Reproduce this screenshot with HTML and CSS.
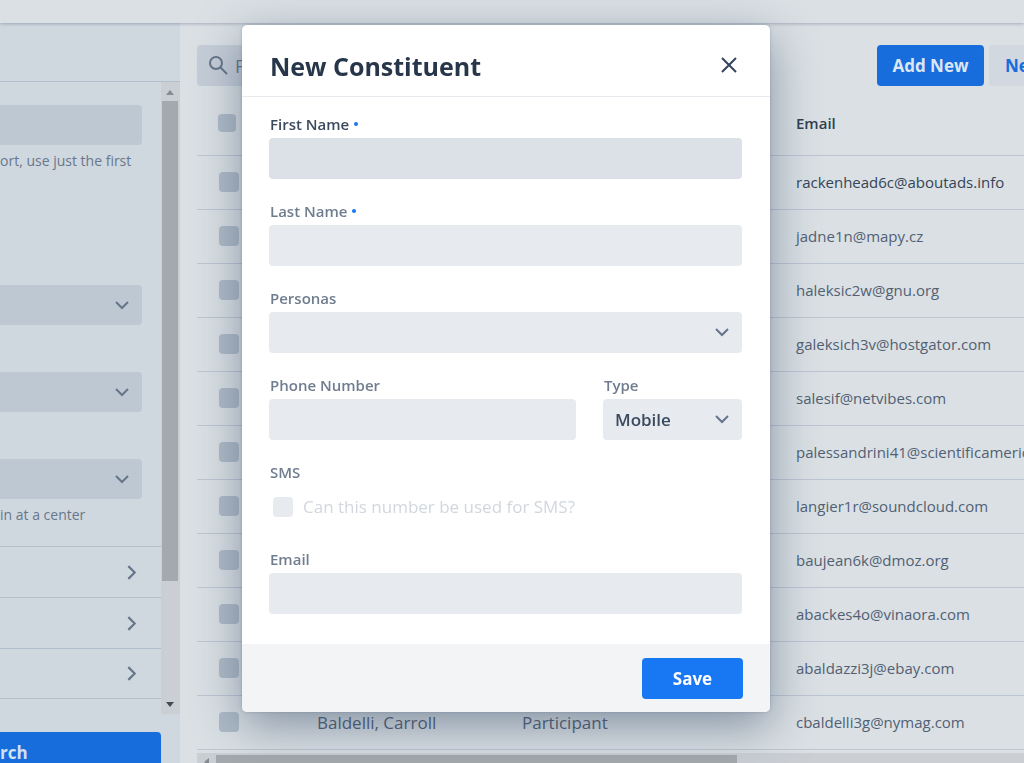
FILE: index.html
```html
<!DOCTYPE html>
<html lang="en">
  <head>
    <meta charset="UTF-8" />
    <meta name="viewport" content="width=device-width, initial-scale=1.0" />
    <title>New Constituent</title>
    <link rel="stylesheet" href="styles.css">
  </head>
  <body>
    <header class="topbar"></header>
    <div class="page">
      <aside class="sidebar">
        <div class="sidebar-head"></div>
        <div class="sidebar-scroll">
          <div class="filters">
            <div class="filter filter-tall">
              <input type="text" class="filter-control" />
              <p class="hint">ort, use just the first</p>
            </div>
            <div class="filter">
              <div class="select-wrap">
                <select class="filter-control"></select>
                <svg class="chevron" viewBox="0 0 16 16"><path d="M2 5l6 6 6-6" /></svg>
              </div>
            </div>
            <div class="filter">
              <div class="select-wrap">
                <select class="filter-control"></select>
                <svg class="chevron" viewBox="0 0 16 16"><path d="M2 5l6 6 6-6" /></svg>
              </div>
            </div>
            <div class="filter filter-last">
              <div class="select-wrap">
                <select class="filter-control"></select>
                <svg class="chevron" viewBox="0 0 16 16"><path d="M2 5l6 6 6-6" /></svg>
              </div>
              <p class="hint">in at a center</p>
            </div>
            <button type="button" class="group">
              <svg viewBox="0 0 16 16"><path d="M5 2l6 6-6 6" /></svg>
            </button>
            <button type="button" class="group">
              <svg viewBox="0 0 16 16"><path d="M5 2l6 6-6 6" /></svg>
            </button>
            <button type="button" class="group">
              <svg viewBox="0 0 16 16"><path d="M5 2l6 6-6 6" /></svg>
            </button>
          </div>
          <div class="vbar">
            <svg class="vbar-arrow" viewBox="0 0 18 18"><path d="M5 13l4-5 4 5z" /></svg>
            <div class="vbar-thumb"></div>
            <svg class="vbar-arrow vbar-down" viewBox="0 0 18 18"><path d="M5 6l4 5 4-5z" /></svg>
          </div>
        </div>
        <div class="sidebar-foot">
          <button type="button" class="search-button">rch</button>
        </div>
      </aside>

      <main class="main">
        <div class="toolbar">
          <div class="finder">
            <svg class="finder-icon" viewBox="0 0 20 20">
              <circle cx="8" cy="7" r="6" />
              <path d="M12 11l7 7" />
            </svg>
            <input type="text" class="finder-input" placeholder="Filter" />
          </div>
          <div class="actions">
            <button type="button" class="button">Add New</button>
            <button type="button" class="button button-light">New</button>
          </div>
        </div>
        <table class="people">
          <colgroup>
            <col class="col-check" />
            <col class="col-name" />
            <col class="col-persona" />
            <col class="col-email" />
          </colgroup>
          <thead>
            <tr>
              <th><input type="checkbox" class="check check-small" /></th>
              <th></th>
              <th></th>
              <th>Email</th>
            </tr>
          </thead>
          <tbody>
            <tr class="current"><td><input type="checkbox" class="check" /></td><td></td><td></td><td>rackenhead6c@aboutads.info</td></tr>
            <tr><td><input type="checkbox" class="check" /></td><td></td><td></td><td>jadne1n@mapy.cz</td></tr>
            <tr><td><input type="checkbox" class="check" /></td><td></td><td></td><td>haleksic2w@gnu.org</td></tr>
            <tr><td><input type="checkbox" class="check" /></td><td></td><td></td><td>galeksich3v@hostgator.com</td></tr>
            <tr><td><input type="checkbox" class="check" /></td><td></td><td></td><td>salesif@netvibes.com</td></tr>
            <tr><td><input type="checkbox" class="check" /></td><td></td><td></td><td>palessandrini41@scientificamerican.com</td></tr>
            <tr><td><input type="checkbox" class="check" /></td><td></td><td></td><td>langier1r@soundcloud.com</td></tr>
            <tr><td><input type="checkbox" class="check" /></td><td></td><td></td><td>baujean6k@dmoz.org</td></tr>
            <tr><td><input type="checkbox" class="check" /></td><td></td><td></td><td>abackes4o@vinaora.com</td></tr>
            <tr><td><input type="checkbox" class="check" /></td><td></td><td></td><td>abaldazzi3j@ebay.com</td></tr>
            <tr><td><input type="checkbox" class="check" /></td><td class="large">Baldelli, Carroll</td><td class="large">Participant</td><td>cbaldelli3g@nymag.com</td></tr>
          </tbody>
        </table>
        <div class="hbar">
          <svg class="hbar-arrow" viewBox="0 0 18 18"><path d="M12 5l-5 4 5 4z" /></svg>
          <div class="hbar-thumb"></div>
        </div>
      </main>
    </div>

    <div class="overlay">
      <form class="dialog" role="dialog" aria-labelledby="dialogTitle">
        <div class="dialog-head">
          <h1 id="dialogTitle">New Constituent</h1>
          <button type="button" class="close">
            <svg viewBox="0 0 18 18"><path d="M2 2l14 14M16 2L2 16" /></svg>
          </button>
        </div>
        <div class="dialog-body">
          <div class="field field-focus">
            <label for="firstName">First Name <span class="dot"></span></label>
            <input type="text" id="firstName" class="control" />
          </div>
          <div class="field">
            <label for="lastName">Last Name <span class="dot"></span></label>
            <input type="text" id="lastName" class="control" />
          </div>
          <div class="field">
            <label for="personas">Personas</label>
            <div class="select-wrap">
              <select id="personas" class="control"></select>
              <svg class="chevron" viewBox="0 0 16 16"><path d="M2 5l6 6 6-6" /></svg>
            </div>
          </div>
          <div class="field-row">
            <div class="field">
              <label for="phone">Phone Number</label>
              <input type="tel" id="phone" class="control" />
            </div>
            <div class="field field-type">
              <label for="phoneType">Type</label>
              <div class="select-wrap">
                <select id="phoneType" class="control">
                  <option>Mobile</option>
                </select>
                <svg class="chevron" viewBox="0 0 16 16"><path d="M2 5l6 6 6-6" /></svg>
              </div>
            </div>
          </div>
          <div class="field">
            <div class="field-title">SMS</div>
            <div class="sms">
              <input type="checkbox" id="sms" class="check" disabled />
              <label for="sms">Can this number be used for SMS?</label>
            </div>
          </div>
          <div class="field">
            <label for="email">Email</label>
            <input type="email" id="email" class="control" />
          </div>
        </div>
        <div class="dialog-foot">
          <button type="submit" class="button button-save">Save</button>
        </div>
      </form>
    </div>
  </body>
</html>
```

FILE: styles.css
```css
* {
  box-sizing: border-box;
}
body {
  margin: 0;
  height: 100vh;
  overflow: hidden;
  display: flex;
  flex-direction: column;
  font-family: "Open Sans", "Noto Sans", sans-serif;
  font-size: 15px;
  color: #526074;
  background-color: #dae0e4;
}
button,
input,
select {
  font-family: inherit;
  margin: 0;
}
svg {
  display: block;
  fill: none;
  stroke: #66758a;
  stroke-width: 2;
}
.topbar {
  flex: none;
  height: 23px;
  background-color: #dae0e4;
  box-shadow: 0 1px 3px rgba(60, 80, 105, 0.35);
  z-index: 1;
}
.page {
  flex: 1;
  min-height: 0;
  display: flex;
}

/* Sidebar */
.sidebar {
  flex: none;
  width: 180px;
  display: flex;
  flex-direction: column;
  background-color: #d0d8df;
}
.sidebar-head {
  flex: none;
  height: 59px;
  border-bottom: 1px solid #b1becb;
}
.sidebar-scroll {
  flex: 1;
  min-height: 0;
  display: flex;
}
.filters {
  flex: 1;
  padding-top: 23px;
}
.filter {
  height: 87px;
  padding-right: 19px;
}
.filter-tall {
  height: 180px;
}
.filter-control {
  display: block;
  width: 100%;
  height: 40px;
  border: none;
  border-radius: 0 4px 4px 0;
  background-color: #bdc8d2;
  appearance: none;
}
.hint {
  margin: 4px 0 0;
  font-size: 14px;
  line-height: 24px;
  color: #68778b;
}
.group {
  display: flex;
  width: 100%;
  height: 51px;
  align-items: center;
  justify-content: flex-end;
  padding: 0 21px 0 0;
  border: none;
  border-top: 1px solid #b1becb;
  background: none;
}
.group:last-child {
  border-bottom: 1px solid #b1becb;
}
.group svg {
  width: 17px;
  height: 17px;
}
.select-wrap {
  position: relative;
}
.chevron {
  position: absolute;
  right: 12px;
  top: 12px;
  width: 16px;
  height: 16px;
  pointer-events: none;
}
.vbar {
  width: 19px;
  display: flex;
  flex-direction: column;
  background-color: #cbcfd4;
}
.vbar-arrow,
.hbar-arrow {
  flex: none;
  width: 18px;
  height: 18px;
  stroke: none;
  fill: #878c92;
}
.vbar-down {
  margin-top: auto;
  fill: #454b53;
}
.vbar-thumb {
  width: 16px;
  height: 76%;
  margin: 1px;
  background-color: #a4a9ad;
}
.sidebar-foot {
  flex: none;
  height: 49px;
  padding: 18px 19px 0 0;
}
.search-button {
  width: 100%;
  height: 41px;
  padding: 0;
  border: none;
  border-radius: 0 4px 0 0;
  background-color: #176ddc;
  color: #d3e0f1;
  font-size: 17px;
  font-weight: 700;
  text-align: left;
}

/* Main list */
.main {
  flex: 1;
  min-width: 0;
  padding: 22px 0 0 17px;
  overflow: hidden;
}
.toolbar {
  display: flex;
  justify-content: space-between;
}
.finder {
  display: flex;
  width: 300px;
  height: 41px;
  align-items: center;
  gap: 7px;
  padding: 0 11px;
  border-radius: 4px;
  background-color: #c5cdd7;
}
.finder-icon {
  flex: none;
  width: 20px;
  height: 20px;
}
.finder-input {
  flex: 1;
  min-width: 0;
  padding: 0;
  border: none;
  background: none;
  font-size: 18px;
}
.finder-input::placeholder {
  color: #66758a;
}
.actions {
  display: flex;
  gap: 5px;
  margin-right: -50px;
}
.button {
  height: 41px;
  width: 107px;
  padding: 0;
  border: none;
  border-radius: 4px;
  background-color: #176ddc;
  color: #dce6f2;
  font-size: 17px;
  font-weight: 700;
}
.button-light {
  width: 85px;
  padding: 0 16px;
  background-color: #d1d8df;
  color: #176ddc;
  text-align: left;
}
.people {
  width: 100%;
  table-layout: fixed;
  border-collapse: collapse;
  white-space: nowrap;
}
.col-check {
  width: 120px;
}
.col-name {
  width: 205px;
}
.col-persona {
  width: 274px;
}
.people th {
  height: 69px;
  padding: 6px 0 0;
  text-align: left;
  font-weight: 600;
  color: #2f3e51;
  border-bottom: 1px solid #bcc6d2;
}
.people td {
  height: 54px;
  padding: 0;
  border-bottom: 1px solid #bcc6d2;
}
.people .current {
  color: #354457;
}
.people .large {
  font-size: 17px;
}
.people .check {
  margin-left: 22px;
}
.check {
  display: block;
  width: 20px;
  height: 20px;
  border-radius: 4px;
  background-color: #afbbc7;
  appearance: none;
}
.people .check-small {
  width: 18px;
  height: 18px;
  margin-left: 21px;
}
.hbar {
  display: flex;
  height: 18px;
  margin-top: 3px;
  background-color: #cbcfd4;
}
.hbar-thumb {
  width: 63%;
  height: 16px;
  margin: 2px 1px 0;
  background-color: #a4a9ad;
}

/* Dialog */
.overlay {
  position: fixed;
  inset: 0;
  z-index: 2;
  display: flex;
  align-items: flex-start;
  justify-content: center;
  padding: 25px 12px 0 0;
}
.dialog {
  width: 528px;
  border-radius: 5px;
  overflow: hidden;
  background-color: #fff;
  box-shadow: 0 0 3px rgba(60, 80, 110, 0.3), 0 14px 46px rgba(50, 70, 100, 0.5);
}
.dialog-head {
  display: flex;
  align-items: center;
  justify-content: space-between;
  height: 72px;
  padding: 10px 32px 0 28px;
  border-bottom: 1px solid #e7eaee;
}
.dialog-head h1 {
  margin: 0;
  font-size: 25px;
  font-weight: 700;
  color: #27364a;
}
.close {
  padding: 0;
  border: none;
  background: none;
}
.close svg {
  width: 18px;
  height: 18px;
  margin-bottom: 2px;
  stroke: #34445a;
}
.dialog-body {
  display: flex;
  flex-direction: column;
  gap: 19px;
  padding: 14px 28px 30px 27px;
}
.field {
  flex: 1;
  min-width: 0;
}
.field > label,
.field-title {
  display: block;
  padding-left: 1px;
  font-weight: 600;
  line-height: 27px;
  color: #6f7d8f;
}
.field-focus > label {
  color: #3a4a5f;
}
.dot {
  display: inline-block;
  width: 4px;
  height: 4px;
  margin: 0 0 3px 1px;
  border-radius: 50%;
  background-color: #1877f2;
  vertical-align: middle;
}
.control {
  display: block;
  width: 100%;
  height: 41px;
  padding: 0 12px;
  border: none;
  border-radius: 4px;
  background-color: #e7eaee;
  color: #3a4a5f;
  font-size: 17px;
  font-weight: 600;
  appearance: none;
}
.field-focus .control {
  background-color: #dce0e7;
}
.field-row {
  display: flex;
  gap: 27px;
}
.field-type {
  flex: none;
  width: 139px;
}
.sms {
  display: flex;
  align-items: center;
  gap: 10px;
  height: 41px;
  padding-left: 4px;
  font-size: 17px;
  color: #d2d7df;
}
.sms .check {
  background-color: #e7eaee;
}
.dialog-foot {
  display: flex;
  justify-content: flex-end;
  padding: 14px 27px 13px;
  background-color: #f2f4f6;
}
.button-save {
  width: 101px;
  background-color: #1877f2;
  color: #fff;
}
```
